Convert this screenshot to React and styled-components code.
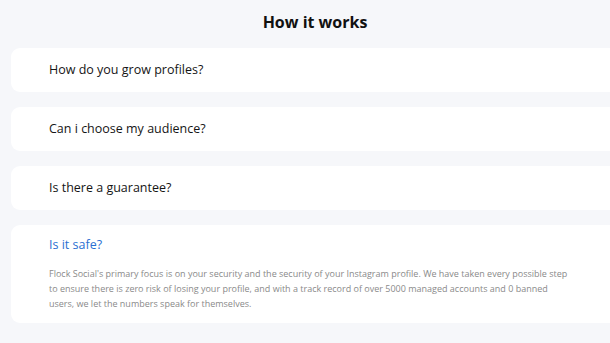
import React from "react";
import styled, { createGlobalStyle } from "styled-components";

const Global = createGlobalStyle`
  html, body { margin: 0; padding: 0; background: #f6f7fa; overflow: hidden; }
  body { font-family: "Open Sans", "Noto Sans", sans-serif; }
`;

const Page = styled.div`
  width: 610px;
  height: 343px;
  overflow: hidden;
  background: #f6f7fa;
`;

const Container = styled.section`
  width: 608px;
  margin-left: 11px;
  padding-top: 9px;
  display: flex;
  flex-direction: column;
`;

const Title = styled.h2`
  margin: 0 0 13px;
  text-align: center;
  font-size: 16px;
  font-weight: 700;
  color: #111;
  line-height: 26px;
`;

const List = styled.div`
  display: flex;
  flex-direction: column;
  gap: 15px;
`;

const Card = styled.div`
  background: #fff;
  border-radius: 9px;
  padding: ${(p) => (p.$open ? "11px 38px 12px" : "0 38px")};
  min-height: ${(p) => (p.$open ? "auto" : "44px")};
  display: flex;
  flex-direction: column;
  justify-content: center;
`;

const Question = styled.div`
  font-size: 12.5px;
  font-weight: 500;
  color: ${(p) => (p.$open ? "#2a6fd2" : "#151515")};
  line-height: 18px;
`;

const Answer = styled.p`
  margin: 12px 0 0;
  font-size: 9px;
  line-height: 15px;
  color: #8a8a8a;
  max-width: 520px;
`;

const faqs = [
  { q: "How do you grow profiles?" },
  { q: "Can i choose my audience?" },
  { q: "Is there a guarantee?" },
  {
    q: "Is it safe?",
    a: "Flock Social's primary focus is on your security and the security of your Instagram profile. We have taken every possible step to ensure there is zero risk of losing your profile, and with a track record of over 5000 managed accounts and 0 banned users, we let the numbers speak for themselves.",
    open: true,
  },
];

export default function App() {
  return (
    <Page>
      <Global />
      <Container>
        <Title>How it works</Title>
        <List>
          {faqs.map((f) => (
            <Card key={f.q} $open={f.open}>
              <Question $open={f.open}>{f.q}</Question>
              {f.a && <Answer>{f.a}</Answer>}
            </Card>
          ))}
        </List>
      </Container>
    </Page>
  );
}
